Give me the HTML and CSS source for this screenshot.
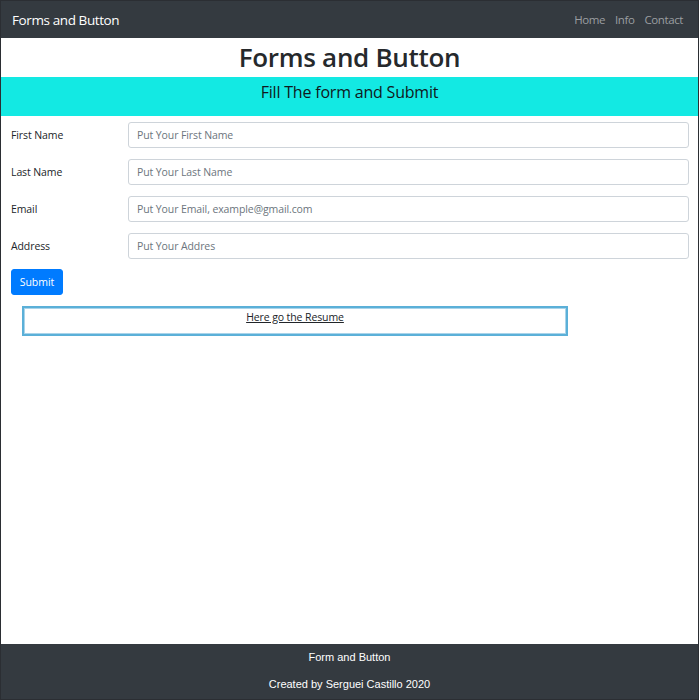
FILE: index.html
```html
<!DOCTYPE html>
<html lang="en">
<head>
<meta charset="utf-8">
<title>Forms and Button</title>
<link rel="stylesheet" href="styles.css">
</head>
<body>
<div class="page">
  <nav class="navbar">
    <span class="brand">Forms and Button</span>
    <div class="links">
      <a href="#">Home</a>
      <a href="#">Info</a>
      <a href="#">Contact</a>
    </div>
  </nav>
  <h1 class="title">Forms and Button</h1>
  <div class="band">Fill The form and Submit</div>
  <form class="form">
    <div class="row"><label>First Name</label><input type="text" placeholder="Put Your First Name"></div>
    <div class="row"><label>Last Name</label><input type="text" placeholder="Put Your Last Name"></div>
    <div class="row"><label>Email</label><input type="text" placeholder="Put Your Email, example@gmail.com"></div>
    <div class="row"><label>Address</label><input type="text" placeholder="Put Your Addres"></div>
    <button type="button" class="submit">Submit</button>
  </form>
  <div class="resume"><a href="#">Here go the Resume</a></div>
  <footer class="footer">
    <p>Form and Button</p>
    <p>Created by Serguei Castillo 2020</p>
  </footer>
</div>
</body>
</html>
```
FILE: styles.css
```css
* { box-sizing: border-box; }
html, body { margin: 0; padding: 0; }
body { font-family: "Open Sans", "Noto Sans", sans-serif; color: #212529; background: #fff; }
.page {
  height: 700px;
  border: 1px solid #2b2e33;
  display: flex;
  flex-direction: column;
}
.navbar {
  height: 37px;
  background: #343a40;
  display: flex;
  align-items: center;
  justify-content: space-between;
  padding: 0 15px 0 11px;
}
.brand { color: #fff; font-size: 13.5px; letter-spacing: -0.4px; }
.links { display: flex; gap: 10px; }
.links a { color: #9b9ea1; font-size: 11.5px; text-decoration: none; letter-spacing: -0.4px; }
.title {
  margin: 0;
  height: 39px;
  line-height: 38px;
  text-align: center;
  font-size: 26px;
  font-weight: 600;
  color: #26292c;
  letter-spacing: -0.3px;
}
.band {
  height: 39px;
  background: #13e9e3;
  text-align: center;
  font-size: 16px;
  line-height: 30px;
  color: #101820;
  letter-spacing: -0.2px;
}
.form {
  padding: 6px 9px 0 10px;
  display: flex;
  flex-direction: column;
  gap: 11px;
  align-items: flex-start;
}
.row { display: flex; width: 100%; height: 26px; }
.row label {
  width: 117px;
  font-size: 10.5px;
  line-height: 26px;
  color: #212529;
  letter-spacing: -0.1px;
}
.row input {
  flex: 1;
  height: 26px;
  border: 1px solid #ced4da;
  border-radius: 3px;
  padding: 0 8px;
  font-family: inherit;
  font-size: 10.5px;
  color: #495057;
  letter-spacing: -0.1px;
}
.row input::placeholder { color: #6c757d; }
.submit {
  margin-top: -1px;
  height: 26px;
  width: 52px;
  background: #007bff;
  border: 1px solid #007bff;
  border-radius: 3px;
  color: #fff;
  font-family: inherit;
  font-size: 10.5px;
  padding: 0;
}
.resume {
  margin: 11px 0 0 21px;
  width: 546px;
  height: 30px;
  border: 2px solid #5bb0d8;
  box-shadow: inset 0 0 0 1px #a9d4ea;
  text-align: center;
  font-size: 10.5px;
  line-height: 16px;
  padding-top: 1px;
  letter-spacing: -0.1px;
}
.resume a { color: #212529; text-decoration: underline; }
.footer {
  margin-top: auto;
  height: 55px;
  background: #343a40;
  color: #fff;
  text-align: center;
  font-family: "Liberation Sans", Arial, sans-serif;
  font-size: 11px;
  padding-top: 7px;
}
.footer p { margin: 0 0 14px; line-height: 13px; }
```
